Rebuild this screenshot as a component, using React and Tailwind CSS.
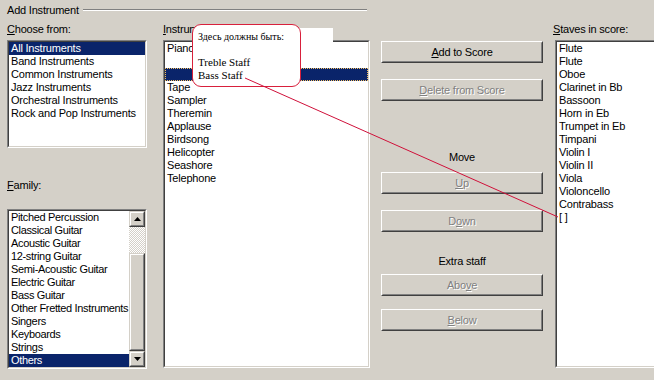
export default function App() {
  const chooseFrom = [
    "All Instruments",
    "Band Instruments",
    "Common Instruments",
    "Jazz Instruments",
    "Orchestral Instruments",
    "Rock and Pop Instruments",
  ];
  const instruments = ["Piano", "", "", "Tape", "Sampler", "Theremin", "Applause", "Birdsong", "Helicopter", "Seashore", "Telephone"];
  const family = [
    "Pitched Percussion",
    "Classical Guitar",
    "Acoustic Guitar",
    "12-string Guitar",
    "Semi-Acoustic Guitar",
    "Electric Guitar",
    "Bass Guitar",
    "Other Fretted Instruments",
    "Singers",
    "Keyboards",
    "Strings",
    "Others",
  ];
  const staves = [
    "Flute",
    "Flute",
    "Oboe",
    "Clarinet in Bb",
    "Bassoon",
    "Horn in Eb",
    "Trumpet in Eb",
    "Timpani",
    "Violin I",
    "Violin II",
    "Viola",
    "Violoncello",
    "Contrabass",
    "[ ]",
  ];

  return (
    <div className="relative w-[654px] h-[380px] overflow-hidden bg-[#d4d0c8] text-black text-[11px] tracking-[-0.2px] font-['Liberation_Sans',Arial,sans-serif]">
      {/* group header */}
      <div className="h-[20px] flex items-center pl-[7px]">
        <span className="leading-[13px]">Add Instrument</span>
        <div className="ml-[4px] w-[284px] border-t border-t-[#808080] border-b border-b-white" />
      </div>

      <div className="flex pl-[7px]">
        {/* choose from + family */}
        <div className="w-[140px] shrink-0 flex flex-col">
          <Label mn="C" rest="hoose from:" />
          <ListBox className="h-[108px]">
            {chooseFrom.map((t, i) => (
              <Row key={i} selected={i === 0}>{t}</Row>
            ))}
          </ListBox>
          <div className="h-[28px]" />
          <Label mn="F" rest="amily:" />
          <div className="h-[13px]" />
          <ListBox className="h-[160px]">
            <div className="flex h-full">
              <div className="flex-1 min-w-0 tracking-[-0.35px]">
                {family.map((t, i) => (
                  <Row key={i} selected={i === family.length - 1}>{t}</Row>
                ))}
              </div>
              <div className="w-[16px] shrink-0 flex flex-col">
                <RaisedBox className="h-[16px]">
                  <svg width="7" height="4" viewBox="0 0 7 4"><path d="M3.5 0L7 4H0z" fill="#000" /></svg>
                </RaisedBox>
                <div className="h-[26px] bg-[conic-gradient(#d4d0c8_25%,#fff_0_50%,#d4d0c8_0_75%,#fff_0)] bg-[length:2px_2px]" />
                <RaisedBox className="flex-1" />
                <RaisedBox className="h-[16px]">
                  <svg width="7" height="4" viewBox="0 0 7 4"><path d="M0 0H7L3.5 4z" fill="#000" /></svg>
                </RaisedBox>
              </div>
            </div>
          </ListBox>
        </div>

        {/* instruments */}
        <div className="ml-[16px] w-[207px] shrink-0 flex flex-col">
          <Label mn="I" rest="nstruments:" />
          <ListBox className="h-[328px]">
            {instruments.map((t, i) => (
              <Row key={i} selected={i === 2} focus={i === 2}>{t}</Row>
            ))}
          </ListBox>
        </div>

        {/* buttons */}
        <div className="ml-[11px] w-[162px] shrink-0 flex flex-col pt-[21px]">
          <WinButton mn="A" rest="dd to Score" />
          <div className="h-[16px]" />
          <WinButton mn="D" rest="elete from Score" disabled />
          <div className="h-[49px] shrink-0" />
          <div className="h-[14px] leading-[14px] text-center">Move</div>
          <div className="h-[8px]" />
          <WinButton mn="U" rest="p" disabled />
          <div className="h-[16px]" />
          <WinButton pre="D" mn="o" rest="wn" disabled />
          <div className="h-[22px]" />
          <div className="h-[14px] leading-[14px] text-center">Extra staff</div>
          <div className="h-[6px]" />
          <WinButton pre="Abo" mn="v" rest="e" disabled />
          <div className="h-[13px]" />
          <WinButton mn="B" rest="elow" disabled />
        </div>

        {/* staves */}
        <div className="ml-[12px] w-[110px] shrink-0 flex flex-col">
          <Label mn="S" rest="taves in score:" className="-ml-[2px]" />
          <ListBox className="h-[328px]">
            {staves.map((t, i) => (
              <Row key={i}>{t}</Row>
            ))}
          </ListBox>
        </div>
      </div>

      {/* annotation overlay */}
      <div className="absolute left-[193px] top-[28px] w-[140px] h-[16px] bg-white" />
      <div className="absolute left-[192px] top-[24px] w-[109px] h-[63px] rounded-[9px] border border-[#d8203c] bg-white tracking-normal font-['Liberation_Serif','Times_New_Roman',serif]">
        <div className="pl-[5px] pt-[6px] text-[10px] leading-[12px]">Здесь должны быть:</div>
        <div className="pl-[5px] pt-[13px] text-[11px] leading-[13px]">Treble Staff</div>
        <div className="pl-[5px] text-[11px] leading-[13px]">Bass Staff</div>
      </div>
      <svg className="absolute left-0 top-0 pointer-events-none" width="654" height="380">
        <line x1="245" y1="78" x2="558" y2="217" stroke="#d0103a" strokeWidth="1" />
      </svg>
    </div>
  );
}

function Label({ pre = "", mn, rest, className = "" }) {
  return (
    <div className={"h-[20px] leading-[18px] whitespace-nowrap " + className}>
      {pre}
      <span className="underline underline-offset-[1px]">{mn}</span>
      {rest}
    </div>
  );
}

function ListBox({ className = "", children }) {
  return (
    <div className={"border border-t-[#808080] border-l-[#808080] border-r-white border-b-white " + className}>
      <div className="h-full bg-white border border-t-[#404040] border-l-[#404040] border-r-[#d4d0c8] border-b-[#d4d0c8] overflow-hidden">
        {children}
      </div>
    </div>
  );
}

function Row({ selected, focus, children }) {
  return (
    <div
      className={
        "h-[13px] leading-[13px] pl-[2px] whitespace-nowrap overflow-hidden " +
        (selected ? "bg-[#0a246a] text-white " : "") +
        (focus ? "outline outline-1 outline-dotted outline-[#f5c060] -outline-offset-1" : "")
      }
    >
      {children}
    </div>
  );
}

function RaisedBox({ className = "", children }) {
  return (
    <div className={"border border-t-[#d4d0c8] border-l-[#d4d0c8] border-r-[#404040] border-b-[#404040] " + className}>
      <div className="h-full bg-[#d4d0c8] border border-t-white border-l-white border-r-[#808080] border-b-[#808080] flex items-center justify-center">
        {children}
      </div>
    </div>
  );
}

function WinButton({ pre = "", mn, rest, disabled }) {
  return (
    <div className="h-[22px] shrink-0 border border-t-white border-l-white border-r-[#404040] border-b-[#404040]">
      <div
        className={
          "h-full border border-t-[#d4d0c8] border-l-[#d4d0c8] border-r-[#808080] border-b-[#808080] flex items-center justify-center " +
          (disabled ? "text-[#808080] [text-shadow:1px_1px_0_#fff]" : "")
        }
      >
        <span>
          {pre}
          <span className="underline underline-offset-[1px]">{mn}</span>
          {rest}
        </span>
      </div>
    </div>
  );
}
